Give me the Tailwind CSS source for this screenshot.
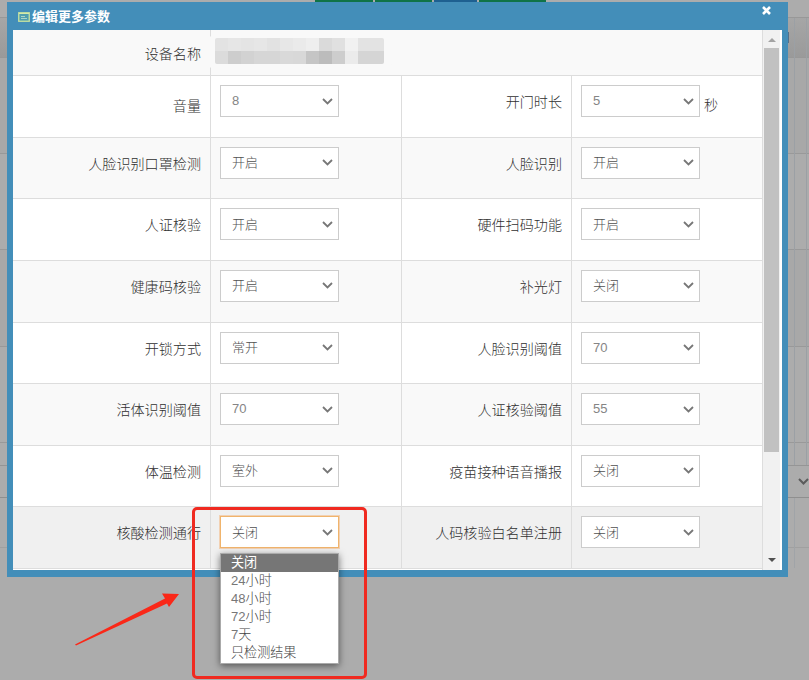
<!DOCTYPE html>
<html lang="zh-CN">
<head>
<meta charset="utf-8">
<title>编辑更多参数</title>
<script src="https://cdn.jsdelivr.net/npm/@tailwindcss/browser@4"></script>
</head>
<body class="relative h-[680px] w-[809px] overflow-hidden bg-[#acacac] font-['Liberation_Sans','Noto_Sans_CJK_SC',sans-serif] text-[#303030]">

<!-- dimmed page behind the dialog -->
<div class="absolute inset-x-0 top-0 flex h-[570px] flex-col">
  <div class="flex h-[18px] shrink-0 border-b border-[#989898] pl-[315px]">
    <div class="flex h-[2px] gap-[2px]">
      <div class="w-[58px] bg-[#107347]"></div><div class="w-[57px] bg-[#107347]"></div><div class="w-[43px] bg-[#1e6091]"></div><div class="w-[67px] bg-[#107347]"></div>
    </div>
  </div>
  <div class="h-[40px] shrink-0 border-b border-[#989898] bg-linear-to-b from-[#a6a6a6] to-[#9a9a9a]"></div>
  <div class="h-24 shrink-0 border-b border-[#999] bg-[#a8a8a8]"></div>
  <div class="h-24 shrink-0 border-b border-[#999]"></div>
  <div class="h-[97px] shrink-0 border-b border-[#999] bg-[#a8a8a8]"></div>
  <div class="h-24 shrink-0 border-b border-[#999]"></div>
  <div class="h-[23px] shrink-0 border-b border-[#959595]"></div>
  <div class="flex h-8 shrink-0 items-center border-b border-[#8f8f8f] pl-[798px]">
    <svg class="h-[7px] w-[11px] shrink-0" viewBox="0 0 11 7" fill="none" stroke="#5b5b5b" stroke-width="2"><path d="M1 1l4.500 4.500L10 1"/></svg>
  </div>
  <div class="h-[50px] shrink-0 border-b border-[#a0a0a0]"></div>
</div>
<div class="absolute top-[18px] left-[794px] h-[447px] w-[13px] border-x border-[#9ba0a5]"></div>
<div class="absolute top-[498px] left-[794px] h-[70px] w-px bg-[#a0a4a8]"></div>
<div class="absolute top-[32px] left-[785px] h-[11px] w-[4px] border border-[#53708a]"></div>

<!-- dialog -->
<section class="absolute top-[2px] left-[7px] flex h-[575px] w-[781px] flex-col bg-[#438eb9] px-[6px] pb-[7px]">
  <header class="flex h-[28px] shrink-0 items-start justify-between pr-[11px] pl-[5px]">
    <h1 class="flex items-center gap-[2px] pt-[6px] text-[13px] leading-[18px] font-bold text-white">
      <svg class="h-[10px] w-[12px]" viewBox="0 0 12 10"><rect x=".75" y=".75" width="10.5" height="8.500" fill="#4f9fb0" stroke="#c6e3a0" stroke-width="1.3"/><path d="M1 1.500h10" stroke="#d4eaaa"/><path d="M3 4.500h4M3 6.500h6" stroke="#a9d6c8"/></svg>
      编辑更多参数
    </h1>
    <svg class="mt-[4px] h-[9px] w-[9px]" viewBox="0 0 9 9" stroke="#fff" stroke-width="2.6"><path d="M1 1l7 7M8 1L1 8"/></svg>
  </header>
  <div class="flex h-[540px] w-[769px] bg-white">
    <div id="rows" class="flex w-[750px] flex-col overflow-hidden border-r border-[#ddd]">
      <div class="flex h-[46px] shrink-0 border-b border-[#ddd] bg-[#f9f9f9]">
        <div class="w-[198px] border-r border-[#ddd] pt-[14px] pr-[9px] text-right text-[14.1px] leading-[20px] font-light">设备名称</div>
        <div class="relative -ml-[4px] mt-[5px] h-[34px] rounded-lg bg-[#f9f9f9] pt-[3px] pr-[8px] pl-[8px]">
          <div class="grid h-[26px] w-[169px] grid-cols-13 overflow-hidden rounded-[2px]">
            <i class="bg-[#e3e3e3]"></i><i class="bg-[#e6e6e6]"></i><i class="bg-[#e4e4e4]"></i><i class="bg-[#e6e6e6]"></i><i class="bg-[#e2e2e2]"></i><i class="bg-[#e7e7e7]"></i><i class="bg-[#eaeaea]"></i><i class="bg-[#eeeeee]"></i><i class="bg-[#dadada]"></i><i class="bg-[#e0e0e0]"></i><i class="bg-[#f1f1f1]"></i><i class="bg-[#e3e3e3]"></i><i class="bg-[#e3e3e3]"></i>
            <i class="bg-[#dbdbdb]"></i><i class="bg-[#cdcdcd]"></i><i class="bg-[#d2d2d2]"></i><i class="bg-[#d6d6d6]"></i><i class="bg-[#d6d6d6]"></i><i class="bg-[#d9d9d9]"></i><i class="bg-[#d8d8d8]"></i><i class="bg-[#c5c5c5]"></i><i class="bg-[#bcbcbc]"></i><i class="bg-[#cdcdcd]"></i><i class="bg-[#ebebeb]"></i><i class="bg-[#d5d5d5]"></i><i class="bg-[#d5d5d5]"></i>
          </div>
        </div>
      </div>
    </div>
    <!-- scrollbar -->
    <div class="flex w-[17px] flex-col items-center bg-[#f1f1f1]">
      <svg class="h-[18px] w-[8px] shrink-0" viewBox="0 0 8 18"><path d="M0 12l4-4 4 4z" fill="#a3a3a3"/></svg>
      <div class="h-[404px] w-[15px] shrink-0 bg-[#c1c1c1]"></div>
      <svg class="mt-auto h-[18px] w-[8px]" viewBox="0 0 8 18"><path d="M0 6l4 4 4-4z" fill="#505050"/></svg>
    </div>
  </div>
</section>

<!-- open option list -->
<ul class="absolute top-[553px] left-[220px] h-[111px] w-[119px] border border-[#aaa] bg-white text-[13.1px] leading-[18.1px] font-light text-[#444] shadow-[0_2px_7px_rgba(0,0,0,0.5)]">
  <li class="bg-[#767676] pl-[10px] font-normal text-white">关闭</li>
  <li class="pl-[10px]"><span class="text-[#777]">24</span>小时</li>
  <li class="pl-[10px]"><span class="text-[#777]">48</span>小时</li>
  <li class="pl-[10px]"><span class="text-[#777]">72</span>小时</li>
  <li class="pl-[10px]"><span class="text-[#777]">7</span>天</li>
  <li class="pl-[10px]">只检测结果</li>
</ul>

<!-- annotations -->
<div class="absolute top-[507px] left-[192px] h-[172px] w-[175px] rounded-[5px] border-[3.5px] border-[#f02a20]"></div>
<svg class="absolute top-[590px] left-[70px] h-[60px] w-[112px]" viewBox="0 0 112 60"><path d="M5 54.500L95 8.500L92 3.500L109 4L99 17L97 13.500L6 55.500Z" fill="#fa2818"/></svg>

<script>
const data = [
  ['音量', '8', '开门时长', '5'],
  ['人脸识别口罩检测', '开启', '人脸识别', '开启'],
  ['人证核验', '开启', '硬件扫码功能', '开启'],
  ['健康码核验', '开启', '补光灯', '关闭'],
  ['开锁方式', '常开', '人脸识别阈值', '70'],
  ['活体识别阈值', '70', '人证核验阈值', '55'],
  ['体温检测', '室外', '疫苗接种语音播报', '关闭'],
  ['核酸检测通行', '关闭', '人码核验白名单注册', '关闭'],
];
const select = (v, focused) => `<div class="flex h-[32px] w-[119px] items-center justify-between border bg-white pr-[5px] pl-[11px] text-[13px] font-light ${/\d/.test(v) ? 'text-[#858585]' : 'text-[#505050]'} ${focused ? 'border-[#f0b46c] shadow-[0_0_0_1px_rgba(245,153,66,0.35)]' : 'border-[#ccc]'}"><span>${v}</span><svg class="h-[7px] w-[11px]" viewBox="0 0 11 7" fill="none" stroke="#777" stroke-width="1.8"><path d="M1 1l4.500 4.500L10 1"/></svg></div>`;
const rows = document.getElementById('rows');
data.forEach(([a, av, b, bv], i) => {
  const bg = i === 7 ? 'bg-[#f0f0f0]' : i % 2 ? 'bg-[#f9f9f9]' : 'bg-white';
  rows.insertAdjacentHTML('beforeend', `<div class="flex h-[61.650px] shrink-0 border-b border-[#ddd] ${bg}">
    <div class="w-[198px] border-r border-[#ddd] pr-[9px] text-right text-[14.1px] leading-[20px] font-light ${i === 0 ? 'pt-[20px]' : 'pt-[16px]'}">${a}</div>
    <div class="w-[191px] border-r border-[#ddd] pt-[9px] pl-[9px]">${select(av, i === 7)}</div>
    <div class="w-[170px] border-r border-[#ddd] pr-[9px] text-right text-[14.1px] leading-[20px] font-light pt-[16px]">${b}</div>
    <div class="flex gap-[4px] pt-[9px] pl-[9px]">${select(bv, false)}${i === 0 ? '<span class="pt-[10px] text-[14.1px] leading-[20px] font-light">秒</span>' : ''}</div>
  </div>`);
});
</script>
</body>
</html>
